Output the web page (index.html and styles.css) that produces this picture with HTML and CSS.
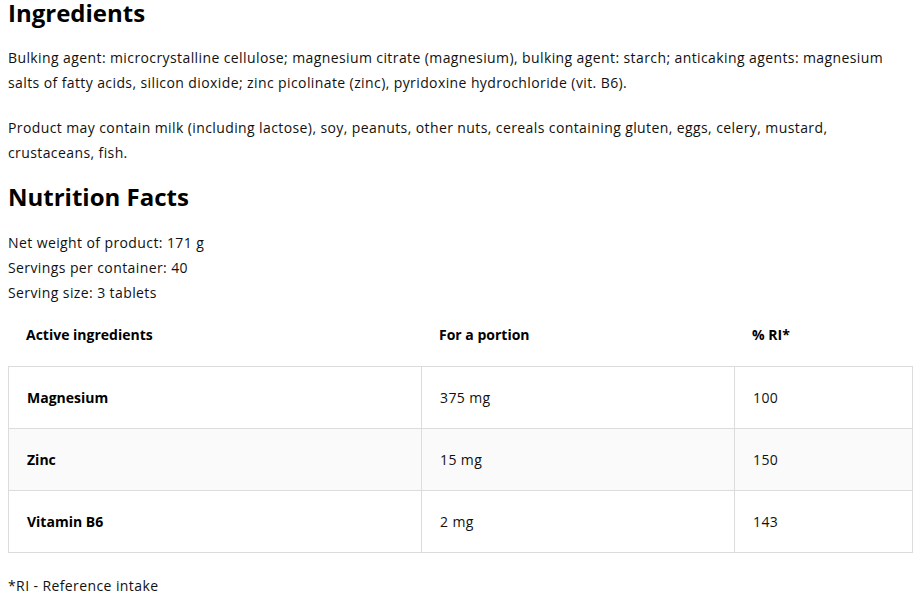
FILE: index.html
```html
<!DOCTYPE html>
<html lang="en">
<head>
<meta charset="utf-8">
<title>Nutrition Facts</title>
<link rel="stylesheet" href="styles.css">
</head>
<body>
<main class="content">
  <h2 class="heading heading-first">Ingredients</h2>
  <p class="text">Bulking agent: microcrystalline cellulose; magnesium citrate (magnesium), bulking agent: starch; anticaking agents: magnesium salts of fatty acids, silicon dioxide; zinc picolinate (zinc), pyridoxine hydrochloride (vit. B6).</p>
  <p class="text">Product may contain milk (including lactose), soy, peanuts, other nuts, cereals containing gluten, eggs, celery, mustard, crustaceans, fish.</p>
  <h2 class="heading">Nutrition Facts</h2>
  <p class="text text-tight">Net weight of product: 171 g<br>Servings per container: 40<br>Serving size: 3 tablets</p>
  <table class="facts">
    <colgroup>
      <col class="c1"><col class="c2"><col class="c3">
    </colgroup>
    <thead>
      <tr><th>Active ingredients</th><th>For a portion</th><th>% RI*</th></tr>
    </thead>
    <tbody>
      <tr><td class="name">Magnesium</td><td>375 mg</td><td class="last">100</td></tr>
      <tr class="alt"><td class="name">Zinc</td><td>15 mg</td><td class="last">150</td></tr>
      <tr class="end"><td class="name">Vitamin B6</td><td>2 mg</td><td class="last">143</td></tr>
    </tbody>
  </table>
  <p class="text note">*RI - Reference intake</p>
</main>
</body>
</html>
```
FILE: styles.css
```css
html, body {
  margin: 0;
  padding: 0;
  background: #fff;
}
body {
  font-family: "Open Sans", "Liberation Sans", sans-serif;
  color: #111;
  font-size: 14px;
  line-height: 25px;
  letter-spacing: 0.4px;
}
.content {
  padding: 0 6px 0 8px;
}
.heading {
  font-size: 24px;
  line-height: 24px;
  font-weight: 700;
  color: #000;
  letter-spacing: 0;
  margin: 20px 0 21px;
}
.heading-first {
  margin-top: 1px;
  margin-bottom: 20px;
}
.text {
  margin: 0 0 20px;
}
.text-tight {
  margin-bottom: 0;
}
.facts {
  width: 905px;
  border-collapse: separate;
  border-spacing: 0;
  table-layout: fixed;
}
.c1 { width: 413px; }
.c2 { width: 313px; }
.c3 { width: 179px; }
.facts th {
  text-align: left;
  font-weight: 700;
  padding: 17px 18px 19px;
  color: #000;
  letter-spacing: 0;
}
.facts td {
  padding: 18px;
  border-top: 1px solid #dcdcdc;
  border-left: 1px solid #dcdcdc;
}
.facts td.last {
  border-right: 1px solid #dcdcdc;
}
.facts tr.end td {
  border-bottom: 1px solid #dcdcdc;
}
.facts tr.alt td {
  background: #fafafa;
}
.facts td.name {
  font-weight: 700;
  color: #000;
  letter-spacing: 0;
}
.note {
  margin-top: 20px;
}
```
